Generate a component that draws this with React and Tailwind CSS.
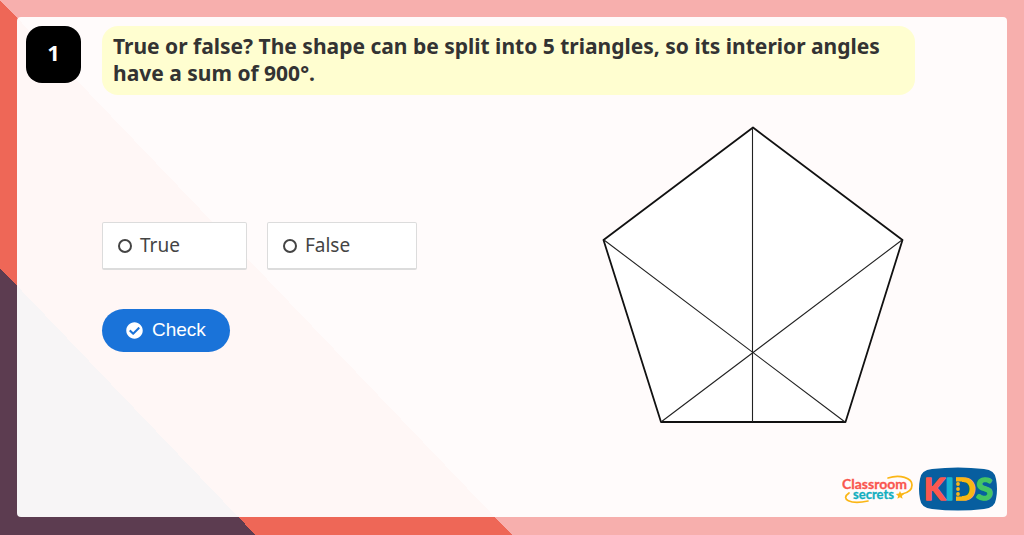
import { useState } from 'react'
import { FaCheckCircle } from 'react-icons/fa'

const OPTIONS = [
  { value: 'true', label: 'True' },
  { value: 'false', label: 'False' },
]

function Pentagon() {
  return (
    <svg viewBox="0 0 302 298" className="w-full" role="img" aria-label="Pentagon divided by lines">
      <polygon points="151,1.5 300.5,114 243.5,296 59,296 1.5,114" fill="#fff" stroke="#111" strokeWidth="1.8" strokeLinejoin="round" />
      <path d="M150.5 2V296M2 114L243 296M300 114L59 296" fill="none" stroke="#222" strokeWidth="1.1" />
    </svg>
  )
}

function ClassroomSecretsLogo() {
  return (
    <svg viewBox="0 0 72 30" className="h-[30px] w-[72px]" role="img" aria-label="Classroom Secrets">
      <path d="M46 4C58 0 70 4 70 11C70 17 65 19 60 20" fill="none" stroke="#fbb615" strokeWidth="1.7" strokeLinecap="round" />
      <path d="M7 19C-2 25 8 31 26 27" fill="none" stroke="#fbb615" strokeWidth="1.7" strokeLinecap="round" />
      <g fontFamily="Lato, sans-serif" fontWeight="700" strokeWidth="0.3">
        <text x="0" y="15" fontSize="14" fill="#f9564f" stroke="#f9564f">Classroom</text>
        <text x="11" y="25" fontSize="13" fill="#12aebf" stroke="#12aebf">secrets</text>
      </g>
      <path d="M58 17l1.2 2.6 2.9.3-2.2 2 .7 2.9-2.6-1.5-2.6 1.5.7-2.9-2.2-2 2.9-.3z" fill="#fbb615" />
    </svg>
  )
}

function KidsLogo() {
  return (
    <svg viewBox="0 0 80 44" className="h-11 w-20" role="img" aria-label="Kids">
      <path d="M14 2Q40 -1 66 2Q77 3 78 12Q80 22 78 32Q77 41 66 42Q40 45 14 42Q3 41 2 32Q0 22 2 12Q3 3 14 2Z" fill="#075e9f" />
      <g fontFamily="Lato, sans-serif" fontSize="31" fontWeight="700" strokeWidth="1.6" strokeLinejoin="round">
        <text x="34" y="33" fill="#fbb615" stroke="#fbb615">D</text>
        {/* hides the stem of the D, dots take its place */}
        <path d="M33 14.5h11v15h-11zM33 9h5v27h-5z" fill="#075e9f" />
        <text x="6" y="33" fill="#fb5850" stroke="#fb5850">K</text>
        <text x="27" y="33" fill="#18b4d0" stroke="#18b4d0">I</text>
        <text x="58" y="33" fill="#45c463" stroke="#45c463">S</text>
      </g>
      <g fill="#fbb615">
        <circle cx="40" cy="17" r="1.9" />
        <circle cx="40" cy="22" r="1.9" />
        <circle cx="40" cy="27" r="1.9" />
      </g>
    </svg>
  )
}

export default function App() {
  const [answer, setAnswer] = useState('')

  return (
    <div className="flex min-h-screen flex-col bg-[#f7afad] bg-[linear-gradient(to_top_right,#5c3c50_50%,transparent_50%),linear-gradient(to_top_right,#ee6757_50%,transparent_50%)] bg-[size:25%_50%,50%_100%] bg-[position:left_bottom,left_top] bg-no-repeat p-[17px] pb-[18px] font-['Noto_Sans',sans-serif]">
      <main className="flex flex-1 flex-col rounded bg-white/95 px-[9px] pt-[9px] pb-[6px]">
        <header className="flex items-start gap-[21px]">
          <div className="flex h-[57px] w-[55px] shrink-0 items-center justify-center rounded-2xl bg-black pb-1 text-[22px] font-bold text-white">
            1
          </div>
          <h1 id="question" className="mr-[83px] flex-1 rounded-2xl bg-[#fffed0] px-[11px] pt-[7px] pb-2 text-[21px] leading-[27px] font-bold text-[#333]">
            True or false? The shape can be split into 5 triangles, so its interior angles have a sum of 900°.
          </h1>
        </header>

        <div className="flex items-start justify-between pt-[31px] pr-[94px] pl-[76px]">
          <form className="pt-24" onSubmit={(e) => e.preventDefault()}>
            <div role="radiogroup" aria-labelledby="question" className="flex gap-5">
              {OPTIONS.map(({ value, label }) => (
                <label key={value} className="flex h-12 items-center gap-2 rounded-xs border border-b-2 border-[#dcdcdc] bg-white pr-[66px] pl-[15px] text-[19px] text-[#444]">
                  <input
                    type="radio"
                    name="answer"
                    value={value}
                    checked={answer === value}
                    onChange={() => setAnswer(value)}
                    className="size-[14px] appearance-none rounded-full border-2 border-[#444] checked:bg-[#444]"
                  />
                  {label}
                </label>
              ))}
            </div>
            <button type="submit" className="mt-[39px] flex h-[43px] items-center gap-[9px] rounded-full bg-[#1a73d9] px-6 font-['Liberation_Sans',sans-serif] text-[19px] text-white">
              <FaCheckCircle size={17} />
              Check
            </button>
          </form>
          <div className="w-[302px]">
            <Pentagon />
          </div>
        </div>

        <footer className="mt-auto flex items-center justify-end gap-1">
          <ClassroomSecretsLogo />
          <KidsLogo />
        </footer>
      </main>
    </div>
  )
}
